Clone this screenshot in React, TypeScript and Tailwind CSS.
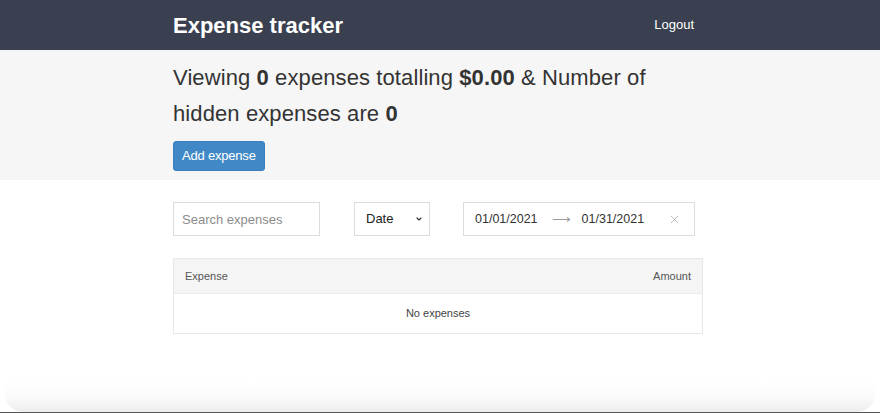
import { ChevronDown, X } from 'lucide-react';

const font = { fontFamily: '"Liberation Sans", Arial, sans-serif' };

const Navbar = () => (
  <nav className="bg-[#3a4050] h-[50px]">
    <div className="ml-[173px] w-[530px] h-full flex items-center justify-between pr-[9px]">
      <h1 className="text-[22px] font-bold text-white">Expense tracker</h1>
      <button className="text-[13px] text-white">Logout</button>
    </div>
  </nav>
);

const Summary = () => (
  <section className="bg-[#f6f6f6] pt-[10px] pb-[9px]">
    <div className="ml-[173px] w-[530px]">
      <p className="text-[22px] leading-[36px] text-[#333] tracking-[0.1px]">
        Viewing <b>0</b> expenses totalling <b>$0.00</b> &amp; Number of hidden expenses are <b>0</b>
      </p>
      <button className="mt-[9px] h-[30px] px-[8px] rounded-[3px] bg-[#4189c6] border border-[#3a7fbb] text-white text-[13px] tracking-[-0.2px]">
        Add expense
      </button>
    </div>
  </section>
);

const Filters = () => (
  <div className="flex items-center mt-[22px] h-[34px]">
    <input
      placeholder="Search expenses"
      className="w-[147px] h-[34px] border border-[#dcdcdc] px-[8px] text-[13px] text-[#333] placeholder:text-[#8c8c8c] outline-none"
    />
    <div className="ml-[34px] w-[76px] h-[34px] border border-[#dcdcdc] flex items-center justify-between pl-[11px] pr-[6px] text-[13px] text-[#222]">
      <span>Date</span>
      <ChevronDown size={8} strokeWidth={3.5} className="text-[#333]" />
    </div>
    <div className="ml-[33px] w-[232px] h-[34px] border border-[#dcdcdc] flex items-center pl-[11px] pr-[13px] text-[12.5px] text-[#333]">
      <span>01/01/2021</span>
      <span className="ml-[14px] text-[#999] text-[13px] leading-none">⟶</span>
      <span className="ml-[11px]">01/31/2021</span>
      <X size={13} strokeWidth={1.2} className="ml-auto text-[#9a9a9a]" />
    </div>
  </div>
);

const Table = () => (
  <div className="mt-[22px] border border-[#e8e8e8] text-[11px] text-[#555]">
    <div className="h-[35px] bg-[#f5f5f5] border-b border-[#ececec] flex items-center justify-between px-[11px]">
      <span>Expense</span>
      <span>Amount</span>
    </div>
    <div className="h-[39px] flex items-center justify-center text-[11px] text-[#444]">No expenses</div>
  </div>
);

export default function App() {
  return (
    <div style={font} className="h-[413px] bg-white flex flex-col overflow-hidden">
      <Navbar />
      <Summary />
      <main className="flex-1 ml-[173px] w-[530px]">
        <Filters />
        <Table />
      </main>
      <div className="h-[32px] mx-[4px] rounded-b-[20px] bg-gradient-to-b from-white via-[#fbfbfb] to-[#ededed]" />
      <div className="h-[1px] bg-[#555]" />
    </div>
  );
}
